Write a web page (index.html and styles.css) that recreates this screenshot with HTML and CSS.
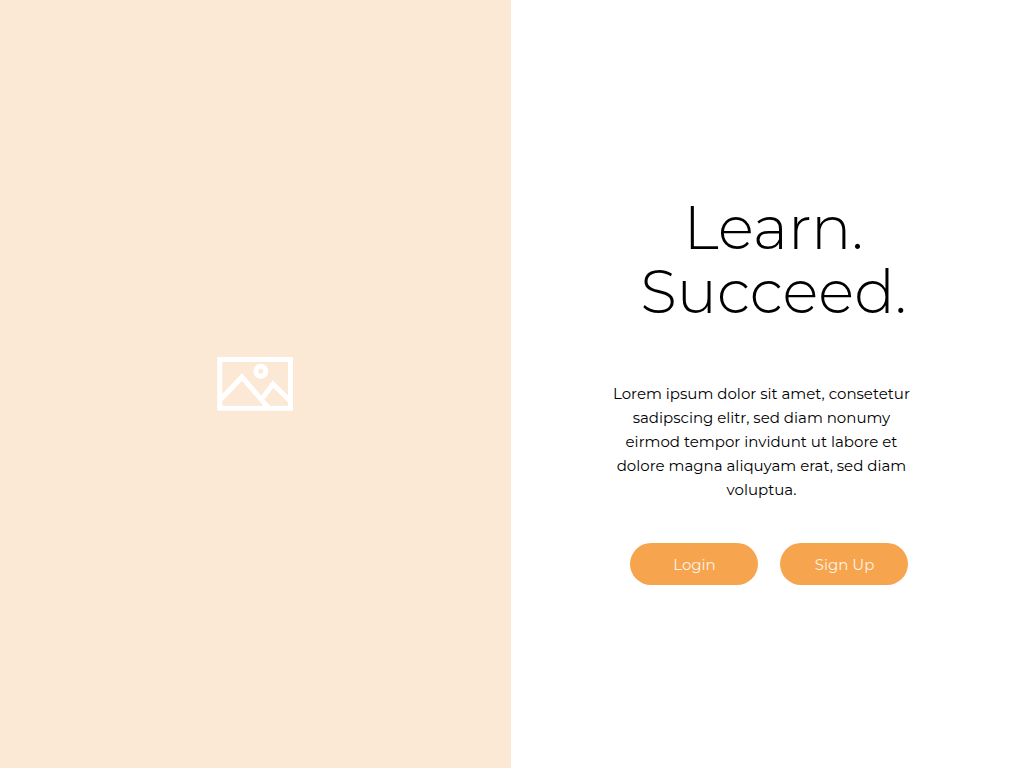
FILE: index.html
```html
<!DOCTYPE html>
<html lang="en">
<head>
  <meta charset="utf-8">
  <meta name="viewport" content="width=device-width, initial-scale=1">
  <title>Learn. Succeed.</title>
  <link rel="stylesheet" href="styles.css">
</head>
<body>
  <main class="split">
    <div class="cover">
      <svg class="cover-icon" viewBox="0 0 76 54" fill="none" stroke="#fff" stroke-width="5" aria-hidden="true">
        <rect x="2.8" y="2.5" width="70.7" height="48.8"/>
        <circle cx="43.8" cy="14.3" r="5"/>
        <path d="M3 43 25 20 52 51.5M46 40.5 56 27 73 44" stroke-linejoin="miter"/>
      </svg>
    </div>
    <section class="intro">
      <h1 class="title">Learn.<br>Succeed.</h1>
      <p class="lead">Lorem ipsum dolor sit amet, consetetur<br>sadipscing elitr, sed diam nonumy<br>eirmod tempor invidunt ut labore et<br>dolore magna aliquyam erat, sed diam<br>voluptua.</p>
      <div class="actions">
        <button class="button" type="button">Login</button>
        <button class="button" type="button">Sign Up</button>
      </div>
    </section>
  </main>
</body>
</html>
```
FILE: styles.css
```css
* {
  box-sizing: border-box;
}

body {
  margin: 0;
  background: #fff;
  color: #000;
  font-family: Montserrat, Inter, sans-serif;
}

.split {
  display: grid;
  grid-template-columns: 49.9% 1fr;
  min-height: 100vh;
}

.cover {
  display: flex;
  align-items: center;
  justify-content: center;
  background: #fbe9d5;
}

.cover-icon {
  width: 76px;
  height: 54px;
}

.intro {
  display: flex;
  flex-direction: column;
  align-items: center;
  justify-content: center;
  padding-top: 13px;
  text-align: center;
}

.title {
  margin: 0;
  padding-left: 12px;
  font-size: 60px;
  font-weight: 300;
  line-height: 64px;
}

.lead {
  margin: 58px 0 41px;
  padding-right: 12px;
  font-size: 15px;
  line-height: 24px;
}

.actions {
  display: flex;
  gap: 22px;
  padding-left: 4px;
}

.button {
  width: 128px;
  height: 42px;
  padding: 0;
  border: 0;
  border-radius: 21px;
  background: #f6a44e;
  color: #fff3e6;
  font: inherit;
  font-size: 15px;
  cursor: pointer;
}
```
